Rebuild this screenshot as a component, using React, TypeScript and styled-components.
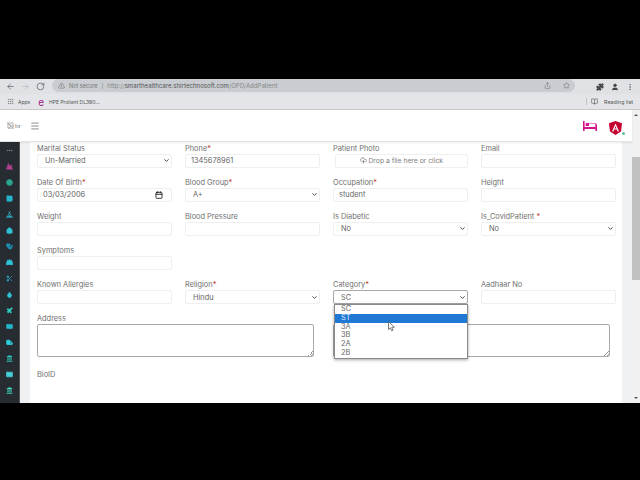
import React from "react";
import styled, { createGlobalStyle } from "styled-components";
import {
  ArrowLeft,
  ArrowRight,
  RotateCw,
  TriangleAlert,
  Star,
  Share,
  Puzzle,
  User,
  EllipsisVertical,
  Grip,
  BookOpen,
  Menu,
  BedDouble,
  Calendar,
  CloudUpload,
  ImageOff,
  Mountain,
  Disc,
  Image,
  Tent,
  House,
  Stethoscope,
  Scissors,
  Droplet,
  Plane,
  IdCard,
  Ambulance,
  Landmark,
  Mail,
  Ellipsis,
  ChevronDown,
} from "lucide-react";

const GlobalStyle = createGlobalStyle`
  html, body {
    margin: 0;
    padding: 0;
    background: #000;
    overflow: hidden;
  }
  * {
    box-sizing: border-box;
  }
`;

// Styled Components
const Screen = styled.div`
  width: 640px;
  height: 480px;
  background: #000;
  padding: 79px 0 77px;
  font-family: "Inter", "Open Sans", sans-serif;
  overflow: hidden;
`;

const Browser = styled.div`
  height: 324px;
  display: flex;
  flex-direction: column;
  background: #fff;
`;

const Toolbar = styled.div`
  height: 15px;
  flex: none;
  display: flex;
  align-items: center;
  gap: 7px;
  padding: 0 6px;
  background: #dfe1e5;
  color: #5f6368;
`;

const NavIcons = styled.div`
  display: flex;
  gap: 6px;
  align-items: center;
  color: #5f6368;
`;

const UrlPill = styled.div`
  width: 523px;
  height: 13px;
  align-self: flex-start;
  border-radius: 7px;
  background: #c9cdd1;
  display: flex;
  align-items: center;
  gap: 4px;
  padding: 0 5px 0 6px;
  font-size: 5.5px;
  color: #777;
`;

const UrlText = styled.span`
  flex: 1;
  font-size: 6.1px;
  color: #888;
  white-space: nowrap;
`;

const UrlHost = styled.span`
  color: #555;
`;

const StarIcon = styled(Star)`
  margin-left: 8px;
`;

const ToolIcons = styled.div`
  margin-left: auto;
  display: flex;
  align-items: center;
  gap: 7px;
`;

const Bookmarks = styled.div`
  height: 16px;
  flex: none;
  display: flex;
  align-items: center;
  gap: 4px;
  padding: 0 7px;
  background: #e3e5e8;
  border-bottom: 1px solid #c8c8c8;
  font-size: 5px;
  color: #555;
`;

const EdgeGlyph = styled.span`
  margin: 0 1px 0 4px;
  color: #a0148c;
  font-size: 10px;
  line-height: 10px;
`;

const Reading = styled.div`
  margin-left: auto;
  display: flex;
  align-items: center;
  gap: 6px;
  padding-left: 4px;
  border-left: 1px solid #c4c4c4;
  font-size: 5.3px;
`;

const Viewport = styled.div`
  flex: 1;
  min-height: 0;
  display: flex;
`;

const Page = styled.div`
  flex: 1;
  display: flex;
  flex-direction: column;
  min-width: 0;
`;

const Header = styled.header`
  height: 32px;
  flex: none;
  display: flex;
  align-items: center;
  padding: 0 10px 0 7px;
  background: #fff;
  border-bottom: 1px solid #e4e4e4;
  box-shadow: 0 1px 2px rgba(0, 0, 0, 0.08);
  position: relative;
  z-index: 1;
`;

const BrokenLogo = styled.div`
  display: flex;
  align-items: center;
  gap: 1px;
  width: 23px;
  font-size: 7px;
  color: #777;
  font-family: "Liberation Serif", serif;
`;

const HeaderRight = styled.div`
  margin-left: auto;
  display: flex;
  align-items: center;
  gap: 12px;
`;

const AngularBadge = styled.div`
  position: relative;
  width: 13px;
  height: 14px;
`;

const OnlineDot = styled.span`
  position: absolute;
  right: -3px;
  bottom: -2px;
  width: 3px;
  height: 3px;
  border-radius: 50%;
  background: #5fbf9f;
`;

const Body = styled.div`
  flex: 1;
  min-height: 0;
  display: flex;
  background: #f0f1f2;
`;

const Sidebar = styled.nav`
  width: 20px;
  flex: none;
  display: flex;
  flex-direction: column;
  align-items: center;
  gap: 9px;
  padding-top: 5px;
  background: #272c33;
  border-right: 1px solid #555;
`;

const Content = styled.main`
  flex: 1;
  margin: 0 10px;
  background: #fff;
  padding: 1.5px 6px 0 7px;
  position: relative;
  overflow: hidden;
`;

const FormGrid = styled.div`
  display: grid;
  grid-template-columns: repeat(4, 134.5px);
  column-gap: 13.5px;
  grid-auto-rows: 34.2px;
`;

const Field = styled.div<{ $wide?: boolean }>`
  grid-column: ${(p) => (p.$wide ? "span 2" : "span 1")};
  min-width: 0;
`;

const Label = styled.div`
  font-size: 7.4px;
  line-height: 9px;
  height: 10px;
  color: #707070;
  white-space: nowrap;
`;

const BioLabel = styled(Label)`
  margin-top: 21px;
`;

const Req = styled.span`
  color: #c0392b;
`;

const Control = styled.div<{ $active?: boolean }>`
  height: 14px;
  display: flex;
  align-items: center;
  justify-content: space-between;
  padding: 0 1px 0 5px;
  border: 1px solid ${(p) => (p.$active ? "#a8a8a8" : "#efefef")};
  border-radius: 2px;
  background: #fff;
  font-size: 7.4px;
  color: #666;
  white-space: nowrap;
`;

const SelectValue = styled.span`
  padding-left: 2px;
`;

const DateControl = styled(Control)`
  padding: 0 8px 0 5px;
`;

const Drop = styled(Control)`
  justify-content: center;
  gap: 1px;
  margin-left: 2px;
  padding: 0 4px 0 5px;
  font-size: 6.8px;
  color: #808080;
`;

const TextArea = styled.div`
  position: relative;
  width: 277px;
  height: 33px;
  border: 1px solid #a9a9a9;
  border-radius: 2px;
  background: #fff;
  &::after {
    content: "";
    position: absolute;
    right: 0;
    bottom: 0;
    width: 5px;
    height: 5px;
    background: linear-gradient(135deg, transparent 50%, #999 50%, #999 60%, transparent 60%, transparent 75%, #999 75%, #999 85%, transparent 85%);
  }
`;

const Options = styled.ul`
  position: absolute;
  left: 304px;
  top: 162px;
  width: 134px;
  margin: 0;
  padding: 0;
  list-style: none;
  background: #fff;
  border: 1px solid #8a8a8a;
  box-shadow: 0 1px 3px rgba(0, 0, 0, 0.35);
  font-size: 7.4px;
  color: #666;
`;

const Option = styled.li<{ $selected?: boolean }>`
  height: 8.8px;
  line-height: 8px;
  padding-left: 6px;
  background: ${(p) => (p.$selected ? "#1e78d4" : "transparent")};
  color: ${(p) => (p.$selected ? "#dce9f7" : "#666")};
`;

const Cursor = styled.div`
  position: absolute;
  left: 358px;
  top: 179px;
  line-height: 0;
`;

const Scrollbar = styled.div`
  width: 8px;
  flex: none;
  display: flex;
  flex-direction: column;
  background: #f1f1f1;
`;

const Arrow = styled.div<{ $down?: boolean }>`
  height: 10px;
  flex: none;
  display: flex;
  justify-content: center;
  align-items: center;
  &::before {
    content: "";
    border-left: 2px solid transparent;
    border-right: 2px solid transparent;
    ${(p) => (p.$down ? "border-top" : "border-bottom")}: 2px solid #555;
  }
`;

const Track = styled.div`
  flex: 1;
  padding-top: 37px;
`;

const Thumb = styled.div`
  height: 123px;
  background: #c1c1c1;
`;

const sideIcons = [
  { Icon: Ellipsis, color: "#8a8f96" },
  { Icon: Mountain, color: "#b0408f" },
  { Icon: Disc, color: "#2aa58f" },
  { Icon: Image, color: "#25b5c9" },
  { Icon: Tent, color: "#2fc3d8" },
  { Icon: House, color: "#2fc3d8" },
  { Icon: Stethoscope, color: "#1f8fb5" },
  { Icon: BedDouble, color: "#2fc3d8" },
  { Icon: Scissors, color: "#2a9fb5" },
  { Icon: Droplet, color: "#2fc3d8" },
  { Icon: Plane, color: "#2fd0c0" },
  { Icon: IdCard, color: "#25b5c9" },
  { Icon: Ambulance, color: "#2fd0e0" },
  { Icon: Landmark, color: "#2fd0c0" },
  { Icon: Mail, color: "#45d0d8" },
  { Icon: Landmark, color: "#45e0c8" },
];

const Caret = () => <ChevronDown size={7} strokeWidth={3} color="#333" />;

const Select = ({ value }: { value: string }) => (
  <Control>
    <SelectValue>{value}</SelectValue>
    <Caret />
  </Control>
);

const App = () => {
  return (
    <Screen>
      <GlobalStyle />
      <Browser>
        <Toolbar>
          <NavIcons>
            <ArrowLeft size={9} />
            <ArrowRight size={9} color="#b5b8bc" />
            <RotateCw size={9} />
          </NavIcons>
          <UrlPill>
            <TriangleAlert size={7} />
            <span>Not secure</span>
            <span>|</span>
            <UrlText>
              http://<UrlHost>smarthealthcare.shirtechnosoft.com</UrlHost>/OPD/AddPatient
            </UrlText>
            <Share size={7} />
            <StarIcon size={7} />
          </UrlPill>
          <ToolIcons>
            <Puzzle size={8} fill="#444" color="#444" />
            <User size={8} fill="#444" color="#444" />
            <EllipsisVertical size={8} />
          </ToolIcons>
        </Toolbar>
        <Bookmarks>
          <Grip size={7} color="#777" />
          <span>Apps</span>
          <EdgeGlyph>e</EdgeGlyph>
          <span>HPE Proliant DL380...</span>
          <Reading>
            <BookOpen size={7} />
            <span>Reading list</span>
          </Reading>
        </Bookmarks>
        <Viewport>
          <Page>
            <Header>
              <BrokenLogo>
                <ImageOff size={7} />
                <span>br</span>
              </BrokenLogo>
              <Menu size={10} color="#777" />
              <HeaderRight>
                <svg width="14" height="10" viewBox="0 0 14 10">
                  <path d="M0 0 H1.6 V6 H12.4 V3.6 A1.2 1.2 0 0 0 11.2 2.4 H6 V5 H2.6 V3 A1.2 1.2 0 0 1 5 3 V2 H11.4 A2.6 2.6 0 0 1 14 4.6 V10 H12.4 V8 H1.6 V10 H0 Z" fill="#d6128f" />
                </svg>
                <AngularBadge>
                  <svg width="13" height="14" viewBox="0 0 13 14">
                    <path d="M6.5 0 L13 2.3 L12 10.5 L6.5 14 L1 10.5 L0 2.3 Z" fill="#c3002f" />
                    <path d="M6.5 2.5 L3 10.5 L4.4 10.5 L5.1 8.6 L7.9 8.6 L8.6 10.5 L10 10.5 Z M6.5 5 L7.4 7.4 L5.6 7.4 Z" fill="#fff" />
                  </svg>
                  <OnlineDot />
                </AngularBadge>
              </HeaderRight>
            </Header>
            <Body>
              <Sidebar>
                {sideIcons.map(({ Icon, color }, i) => (
                  <Icon key={i} size={7} color={color} fill={color} strokeWidth={2.4} />
                ))}
              </Sidebar>
              <Content>
                <FormGrid>
                  <Field>
                    <Label>Marital Status</Label>
                    <Select value="Un-Married" />
                  </Field>
                  <Field>
                    <Label>Phone<Req>*</Req></Label>
                    <Control>1345678961</Control>
                  </Field>
                  <Field>
                    <Label>Patient Photo</Label>
                    <Drop>
                      <CloudUpload size={7} color="#555" />
                      Drop a file here or click
                    </Drop>
                  </Field>
                  <Field>
                    <Label>Email</Label>
                    <Control />
                  </Field>

                  <Field>
                    <Label>Date Of Birth<Req>*</Req></Label>
                    <DateControl>
                      <span>03/03/2006</span>
                      <Calendar size={8} color="#222" strokeWidth={2.6} />
                    </DateControl>
                  </Field>
                  <Field>
                    <Label>Blood Group<Req>*</Req></Label>
                    <Select value="A+" />
                  </Field>
                  <Field>
                    <Label>Occupation<Req>*</Req></Label>
                    <Control>student</Control>
                  </Field>
                  <Field>
                    <Label>Height</Label>
                    <Control />
                  </Field>

                  <Field>
                    <Label>Weight</Label>
                    <Control />
                  </Field>
                  <Field>
                    <Label>Blood Pressure</Label>
                    <Control />
                  </Field>
                  <Field>
                    <Label>Is Diabetic</Label>
                    <Select value="No" />
                  </Field>
                  <Field>
                    <Label>Is_CovidPatient <Req>*</Req></Label>
                    <Select value="No" />
                  </Field>

                  <Field>
                    <Label>Symptoms</Label>
                    <Control />
                  </Field>
                  <Field />
                  <Field />
                  <Field />

                  <Field>
                    <Label>Known Allergies</Label>
                    <Control />
                  </Field>
                  <Field>
                    <Label>Religion<Req>*</Req></Label>
                    <Select value="Hindu" />
                  </Field>
                  <Field>
                    <Label>Category<Req>*</Req></Label>
                    <Control $active>
                      <SelectValue>SC</SelectValue>
                      <Caret />
                    </Control>
                  </Field>
                  <Field>
                    <Label>Aadhaar No</Label>
                    <Control />
                  </Field>

                  <Field $wide>
                    <Label>Address</Label>
                    <TextArea />
                  </Field>
                  <Field $wide>
                    <Label />
                    <TextArea />
                  </Field>
                </FormGrid>
                <BioLabel>BioID</BioLabel>
                <Options>
                  <Option>SC</Option>
                  <Option $selected>ST</Option>
                  <Option>3A</Option>
                  <Option>3B</Option>
                  <Option>2A</Option>
                  <Option>2B</Option>
                </Options>
                <Cursor>
                  <svg width="7" height="11" viewBox="0 0 7 11">
                    <path d="M0.5 0.5 V8.5 L2.4 6.9 L3.6 9.8 L5 9.2 L3.8 6.4 L6.3 6.2 Z" fill="#fff" stroke="#444" strokeWidth="0.7" />
                  </svg>
                </Cursor>
              </Content>
            </Body>
          </Page>
          <Scrollbar>
            <Arrow />
            <Track>
              <Thumb />
            </Track>
            <Arrow $down />
          </Scrollbar>
        </Viewport>
      </Browser>
    </Screen>
  );
};

export default App;
